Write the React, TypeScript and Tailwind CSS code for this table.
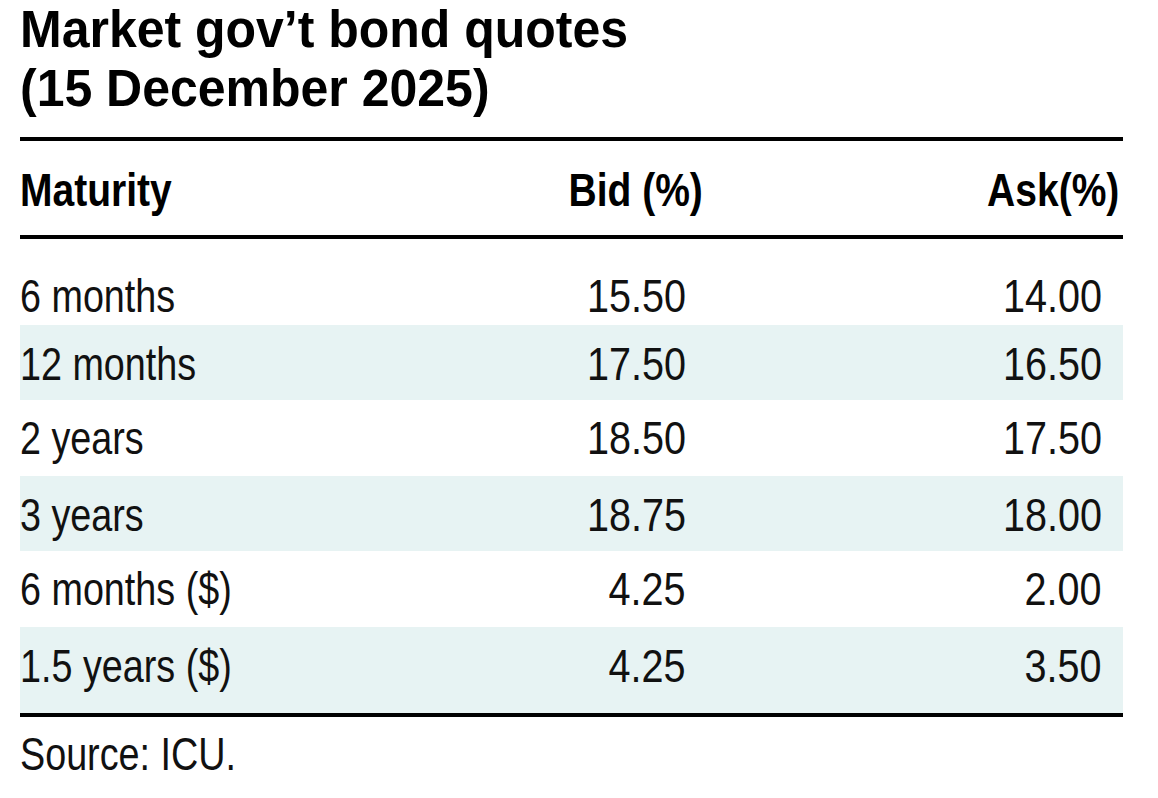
const rows = [
  { maturity: "6 months", bid: "15.50", ask: "14.00" },
  { maturity: "12 months", bid: "17.50", ask: "16.50" },
  { maturity: "2 years", bid: "18.50", ask: "17.50" },
  { maturity: "3 years", bid: "18.75", ask: "18.00" },
  { maturity: "6 months ($)", bid: "4.25", ask: "2.00" },
  { maturity: "1.5 years ($)", bid: "4.25", ask: "3.50" },
];

const rowBox = [
  "h-[86px] pt-[34px]",
  "h-[75px] pt-[16px] bg-[#e7f3f3]",
  "h-[76px] pt-[15px]",
  "h-[75px] pt-[16px] bg-[#e7f3f3]",
  "h-[76px] pt-[15px]",
  "h-[86px] pt-[16px] bg-[#e7f3f3]",
];

// no narrow face installed: squeeze Liberation Sans like Arial Narrow
function NarrowL({ children }: { children: React.ReactNode }) {
  return <span className="inline-block origin-left scale-x-[0.82] whitespace-nowrap">{children}</span>;
}

function HeadL({ children }: { children: React.ReactNode }) {
  return <span className="inline-block origin-left scale-x-[0.83] whitespace-nowrap">{children}</span>;
}

function HeadR({ children }: { children: React.ReactNode }) {
  return <span className="inline-block origin-right scale-x-[0.83] whitespace-nowrap">{children}</span>;
}

// figures sit a little wider than the letters
function Num({ children }: { children: React.ReactNode }) {
  return <span className="inline-block origin-right scale-x-[0.86] whitespace-nowrap">{children}</span>;
}

export default function App() {
  return (
    <div className="min-h-screen w-full bg-white text-[#111] font-['Liberation_Sans',Arial,sans-serif]">
      <div className="w-[1103px] ml-[20px]">
        <h1 className="text-[51px] leading-[59px] font-bold text-black">
          <span className="inline-block origin-left scale-x-[0.98] whitespace-nowrap">Market gov’t bond quotes</span>
          <br />
          <span className="inline-block origin-left scale-x-[0.98] whitespace-nowrap">(15 December 2025)</span>
        </h1>

        <div className="mt-[19px] h-[4px] bg-black" />

        <div className="grid h-[94px] grid-cols-[463px_224px_416px] items-center pt-[3px] text-[47px] leading-[47px] font-bold text-black">
          <div><HeadL>Maturity</HeadL></div>
          <div className="pr-[4px] text-right"><HeadR>Bid (%)</HeadR></div>
          <div className="pr-[4px] text-right"><HeadR>Ask(%)</HeadR></div>
        </div>

        <div className="h-[4px] bg-black" />

        <div className="text-[46px] leading-[46px]">
          {rows.map((r, i) => (
            <div key={r.maturity} className={`grid grid-cols-[463px_224px_416px] items-start ${rowBox[i]}`}>
              <div><NarrowL>{r.maturity}</NarrowL></div>
              <div className="pr-[21px] text-right"><Num>{r.bid}</Num></div>
              <div className="pr-[21px] text-right"><Num>{r.ask}</Num></div>
            </div>
          ))}
        </div>

        <div className="h-[4px] bg-black" />

        <p className="mt-[14px] text-[46px] leading-[46px]">
          <NarrowL>Source: ICU.</NarrowL>
        </p>
      </div>
    </div>
  );
}
